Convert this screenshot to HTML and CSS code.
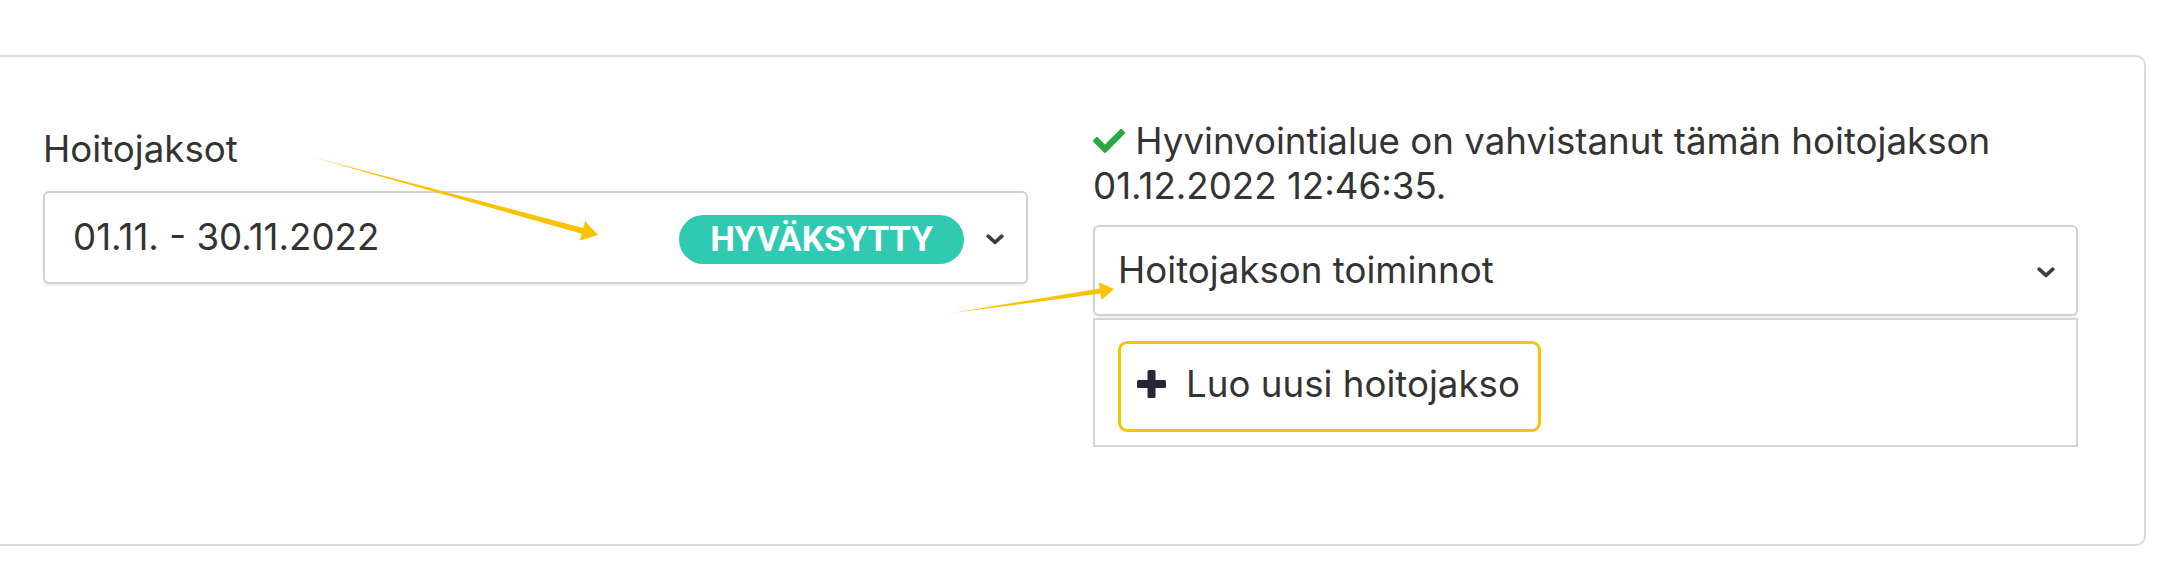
FILE: index.html
```html
<!DOCTYPE html>
<html lang="fi">
<head>
<meta charset="utf-8">
<title>Hoitojaksot</title>
<link rel="stylesheet" href="styles.css">
</head>
<body>
<main class="page">
  <section class="card">
    <div class="col col-left">
      <div class="field-label">Hoitojaksot</div>
      <div class="select select-period">
        <span class="select-value">01.11. - 30.11.2022</span>
        <span class="badge">HYVÄKSYTTY</span>
        <svg class="chevron" viewBox="0 0 18 11" width="18" height="11" aria-hidden="true"><path d="M2.2 2.2 L9 8.4 L15.8 2.2" fill="none" stroke="#3d3d3d" stroke-width="3.6" stroke-linecap="round" stroke-linejoin="round"/></svg>
      </div>
    </div>
    <div class="col col-right">
      <p class="status"><svg class="check" viewBox="0 64 512 384" width="32" height="24" aria-hidden="true"><path fill="#2aa846" d="M173.898 439.404l-166.4-166.4c-9.997-9.997-9.997-26.206 0-36.204l36.203-36.204c9.997-9.998 26.207-9.998 36.204 0L192 312.69 432.095 72.596c9.997-9.997 26.207-9.997 36.204 0l36.203 36.204c9.997 9.997 9.997 26.206 0 36.204l-294.4 294.401c-9.998 9.997-26.207 9.997-36.204-.001z"/></svg> Hyvinvointialue on vahvistanut tämän hoitojakson 01.12.2022 12:46:35.</p>
      <div class="select select-actions">
        <span class="select-value">Hoitojakson toiminnot</span>
        <svg class="chevron" viewBox="0 0 18 11" width="18" height="11" aria-hidden="true"><path d="M2.2 2.2 L9 8.4 L15.8 2.2" fill="none" stroke="#3d3d3d" stroke-width="3.6" stroke-linecap="round" stroke-linejoin="round"/></svg>
      </div>
      <div class="menu">
        <button class="menu-item" type="button">
          <svg class="plus" viewBox="0 0 29 28" width="29" height="28" aria-hidden="true"><rect x="10.5" y="0" width="8" height="28" rx="1.5" fill="#272733"/><rect x="0" y="10" width="29" height="8" rx="1.5" fill="#272733"/></svg>
          <span>Luo uusi hoitojakso</span>
        </button>
      </div>
    </div>
  </section>
  <svg class="annotations" viewBox="0 0 2161 574" width="2161" height="574" aria-hidden="true">
    <polygon fill="#fbc200" points="312,157 583.3,227.9 585.1,221.1 598,235 579.9,240.5 581.7,233.7"/>
    <polygon fill="#fbc200" points="952,313 1099.8,288.6 1098.9,282.2 1114,289 1101.5,300 1100.6,293.6"/>
  </svg>
</main>
</body>
</html>
```

FILE: styles.css
```css
html, body {
  margin: 0;
  padding: 0;
  background: #ffffff;
}

body {
  font-family: "Inter", "Noto Sans", sans-serif;
  color: #333333;
  font-size: 36.7px;
  line-height: 1.2;
}

.page {
  position: relative;
  width: 2161px;
  height: 574px;
  overflow: hidden;
  padding-top: 55px;
  box-sizing: border-box;
}

.card {
  box-sizing: border-box;
  width: 2171px;
  margin-left: -25px;
  border: 2px solid #dadada;
  border-radius: 10px;
  padding: 61px 66px 97px 66px;
  display: grid;
  grid-template-columns: 1fr 1fr;
  column-gap: 65px;
  align-items: start;
}

.col-left {
  padding-top: 9px;
}

.field-label {
  line-height: 43px;
  margin-bottom: 21px;
}

.select {
  box-sizing: border-box;
  display: flex;
  align-items: center;
  border: 2px solid #d2d2d2;
  border-radius: 6px;
  background: #fff;
  box-shadow: 0 2px 3px rgba(0, 0, 0, 0.07);
}

.select-value {
  flex: 1;
  white-space: nowrap;
}

.select-period {
  height: 93px;
  padding: 0 22px 0 28px;
}

.badge {
  font-family: "Roboto", "Inter", sans-serif;
  font-weight: 700;
  font-size: 35px;
  line-height: 49px;
  color: #ffffff;
  background: #30c9b1;
  border-radius: 25px;
  padding: 0 31px;
  margin-right: 22px;
  margin-top: 4px;
}

.chevron {
  display: block;
  flex: none;
  margin-top: 4px;
}

.col-right {
  display: flex;
  flex-direction: column;
}

.status {
  margin: 0;
  line-height: 45px;
}

.check {
  display: inline-block;
  vertical-align: 1px;
}

.select-actions {
  margin-top: 17px;
  height: 91px;
  padding: 0 21px 0 23px;
}

.menu {
  box-sizing: border-box;
  margin-top: 2px;
  border: 2px solid #d4d4d4;
  padding: 21px 0 13px 23px;
  display: flex;
  align-items: flex-start;
}

.menu-item {
  box-sizing: border-box;
  height: 91px;
  display: inline-flex;
  align-items: center;
  gap: 20px;
  padding: 0 18px 5px 16px;
  border: 3px solid #f7c400;
  border-radius: 9px;
  background: #ffffff;
  font: inherit;
  color: #333333;
  cursor: pointer;
}

.plus {
  display: block;
  flex: none;
}

.annotations {
  position: absolute;
  top: 0;
  left: 0;
  pointer-events: none;
}
```
